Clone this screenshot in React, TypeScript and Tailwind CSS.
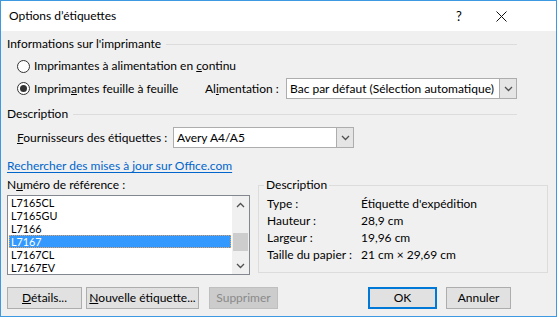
import React from 'react';

const font = { fontFamily: 'Lato, "Noto Sans", sans-serif' };

const Chevron = ({ up = false }: { up?: boolean }) => (
  <svg width="9" height="6" viewBox="0 0 9 6" className="block">
    <polyline
      points={up ? '1,5 4.5,1.5 8,5' : '1,1 4.5,4.5 8,1'}
      fill="none"
      stroke="#505050"
      strokeWidth="1.3"
    />
  </svg>
);

const Radio = ({ checked }: { checked?: boolean }) => (
  <span className="w-[13px] h-[13px] rounded-full border border-[#333333] bg-white flex items-center justify-center shrink-0">
    {checked && <span className="w-[7px] h-[7px] rounded-full bg-[#333333]" />}
  </span>
);

const Combo = ({ value, className }: { value: string; className: string }) => (
  <div className={`h-[21px] border border-[#adadad] bg-white flex ${className}`}>
    <div className="flex-1 flex items-center pl-[3px] overflow-hidden whitespace-nowrap">{value}</div>
    <div className="w-[17px] bg-[#e5e5e5] border-l border-[#adadad] flex items-center justify-center">
      <Chevron />
    </div>
  </div>
);

const SectionHeader = ({ title, className = '' }: { title: string; className?: string }) => (
  <div className={`h-[16px] flex items-center w-[510px] ${className}`}>
    <span>{title}</span>
    <div className="flex-1 h-px bg-[#dcdcdc] ml-[5px]" />
  </div>
);

const items = ['L7165CL', 'L7165GU', 'L7166', 'L7167', 'L7167CL', 'L7167EV'];

const details = [
  ['Type :', "Étiquette d'expédition"],
  ['Hauteur :', '28,9 cm'],
  ['Largeur :', '19,96 cm'],
  ['Taille du papier :', '21 cm × 29,69 cm'],
];

const Btn = ({
  children,
  className,
}: {
  children: React.ReactNode;
  className: string;
}) => (
  <div className={`h-[22px] flex items-center justify-center border ${className}`}>{children}</div>
);

export default function App() {
  return (
    <div
      style={font}
      className="w-[557px] h-[317px] border border-[#3e9ae0] bg-[#f0f0f0] flex flex-col text-[12px] text-black leading-none overflow-hidden whitespace-nowrap"
    >
      <div className="h-[30px] bg-white flex items-center pl-[8px] pr-[34px] shrink-0">
        <span className="flex-1">Options d’étiquettes</span>
        <span className="w-[42px] flex justify-center text-[13px]">?</span>
        <span className="w-[42px] flex justify-center">
          <svg width="11" height="11" viewBox="0 0 11 11">
            <path d="M0.5 0.5 L10.5 10.5 M10.5 0.5 L0.5 10.5" stroke="#111" strokeWidth="1" />
          </svg>
        </span>
      </div>

      <div className="pl-[6px] flex flex-col">
        <SectionHeader title="Informations sur l'imprimante" className="mt-[5px]" />

        <div className="mt-[6px] h-[16px] pl-[10px] flex items-center gap-[4px]">
          <Radio />
          <span>
            Imprimantes à alimentation en <u>c</u>ontinu
          </span>
        </div>

        <div className="mt-[4px] h-[21px] pl-[10px] flex items-center w-[510px]">
          <div className="w-[188px] flex items-center gap-[4px]">
            <Radio checked />
            <span>
              Imprim<u>a</u>ntes feuille à feuille
            </span>
          </div>
          <span className="w-[81px]">
            Al<u>i</u>mentation :
          </span>
          <Combo value="Bac par défaut (Sélection automatique)" className="flex-1" />
        </div>

        <SectionHeader title="Description" className="mt-[7px]" />

        <div className="mt-[5px] h-[21px] pl-[10px] flex items-center">
          <span className="w-[156px]">
            <u>F</u>ournisseurs des étiquettes :
          </span>
          <Combo value="Avery A4/A5" className="w-[181px]" />
        </div>

        <div className="mt-[10px] h-[16px] flex items-center">
          <a className="text-[#0066cc] underline underline-offset-2 cursor-pointer">
            Rechercher des mises à jour sur Office.com
          </a>
        </div>

        <div className="mt-[3px] flex">
          <div className="w-[243px] flex flex-col">
            <div className="h-[16px] flex items-center">
              N<u>u</u>méro de référence :
            </div>
            <div className="mt-[2px] h-[80px] border border-[#828790] bg-white flex">
              <div className="flex-1 flex flex-col px-[1px] text-[10.8px]">
                {items.map((it) => (
                  <div
                    key={it}
                    className={`h-[13px] leading-[13px] pl-[2px] ${
                      it === 'L7167'
                        ? 'bg-[#3399ff] text-white outline-1 outline-dotted outline-[#e8a05a] -outline-offset-1'
                        : ''
                    }`}
                  >
                    {it}
                  </div>
                ))}
              </div>
              <div className="w-[17px] bg-[#f0f0f0] flex flex-col">
                <div className="h-[17px] flex items-center justify-center">
                  <Chevron up />
                </div>
                <div className="flex-1 flex flex-col">
                  <div className="mt-[20px] h-[18px] mx-[1px] bg-[#cdcdcd]" />
                </div>
                <div className="h-[17px] flex items-center justify-center">
                  <Chevron />
                </div>
              </div>
            </div>
          </div>

          <fieldset className="ml-[8px] w-[290px] h-[96px] border border-[#dcdcdc] flex flex-col">
            <legend className="ml-[5px] px-[2px] h-[16px] flex items-center">Description</legend>
            <div className="mt-[2px] pl-[8px] flex flex-col">
              {details.map(([k, v]) => (
                <div key={k} className="h-[17px] flex items-center">
                  <span className="w-[94px]">{k}</span>
                  <span>{v}</span>
                </div>
              ))}
            </div>
          </fieldset>
        </div>

        <div className="mt-[12px] flex items-center">
          <Btn className="w-[75px] bg-[#e1e1e1] border-[#adadad]">
            <span>
              <u>D</u>étails...
            </span>
          </Btn>
          <Btn className="ml-[4px] w-[113px] bg-[#e1e1e1] border-[#adadad]">
            <span>
              <u>N</u>ouvelle étiquette...
            </span>
          </Btn>
          <Btn className="ml-[10px] w-[69px] bg-[#cccccc] border-[#bfbfbf] text-[#8a8a8a]">
            Supprimer
          </Btn>
          <Btn className="ml-[90px] w-[69px] bg-[#e1e1e1] border-2 border-[#0078d7]">OK</Btn>
          <Btn className="ml-[9px] w-[65px] bg-[#e1e1e1] border-[#adadad]">Annuler</Btn>
        </div>
      </div>
    </div>
  );
}
